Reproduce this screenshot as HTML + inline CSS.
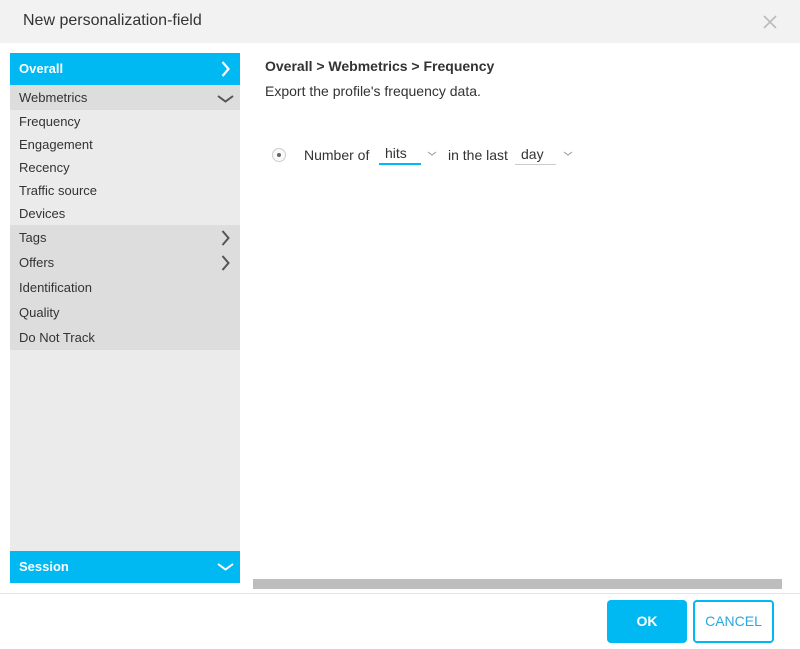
<!DOCTYPE html>
<html><head><style>
*{margin:0;padding:0;box-sizing:border-box}
body{width:800px;height:649px;background:#fff;font-family:"Liberation Sans",sans-serif;position:relative;overflow:hidden;color:#333}
.a{position:absolute}
.hdr{left:0;top:0;width:800px;height:43px;background:#f2f2f2}
.side{left:10px;top:53px;width:230px;height:530px;background:#ebebeb}
.row{position:absolute;left:0;width:230px;font-size:13px;padding-left:9px;color:#333}
.chev{position:absolute;right:10px}
</style></head><body>
<div class="a hdr"></div>
<div class="a" style="left:23px;top:12px;font-size:16px;color:#333">New personalization-field</div>
<svg class="a" style="left:763px;top:15px" width="14" height="14"><path d="M1 1l12 12M13 1L1 13" stroke="#bbb" stroke-width="1.6"/></svg>
<div class="a side">
 <div class="row" style="top:0;height:32px;background:#00b9f2;color:#fff;line-height:32px;font-weight:bold">Overall<svg class="chev" style="top:8px" width="9" height="16"><path d="M1.5 1l6 7-6 7" stroke="#fff" stroke-width="2.2" fill="none"/></svg></div>
 <div class="row" style="top:32px;height:25px;background:#ddd;line-height:25px">Webmetrics<svg class="chev" style="top:10px;right:6px" width="17" height="8"><path d="M1 1l7.5 5.5 7.5-5.5" stroke="#555" stroke-width="2" fill="none"/></svg></div>
 <div class="row" style="top:57px;line-height:23px">Frequency</div>
 <div class="row" style="top:80px;line-height:23px">Engagement</div>
 <div class="row" style="top:103px;line-height:23px">Recency</div>
 <div class="row" style="top:126px;line-height:23px">Traffic source</div>
 <div class="row" style="top:149px;line-height:23px">Devices</div>
 <div class="row" style="top:172px;height:125px;background:#ddd"></div>
 <div class="row" style="top:172px;line-height:25px">Tags<svg class="chev" style="top:5px" width="9" height="16"><path d="M1.5 1l6 7-6 7" stroke="#555" stroke-width="2" fill="none"/></svg></div>
 <div class="row" style="top:197px;line-height:25px">Offers<svg class="chev" style="top:5px" width="9" height="16"><path d="M1.5 1l6 7-6 7" stroke="#555" stroke-width="2" fill="none"/></svg></div>
 <div class="row" style="top:222px;line-height:25px">Identification</div>
 <div class="row" style="top:247px;line-height:25px">Quality</div>
 <div class="row" style="top:272px;line-height:25px">Do Not Track</div>
 <div class="row" style="top:498px;height:32px;background:#00b9f2;color:#fff;line-height:32px;font-weight:bold">Session<svg class="chev" style="top:12px;right:6px" width="17" height="8"><path d="M1 1l7.5 5.5 7.5-5.5" stroke="#fff" stroke-width="2" fill="none"/></svg></div>
</div>
<div class="a" style="left:265px;top:58px;font-size:14px;font-weight:bold;color:#333">Overall &gt; Webmetrics &gt; Frequency</div>
<div class="a" style="left:265px;top:83px;font-size:14px;color:#333">Export the profile's frequency data.</div>
<div class="a" style="left:272px;top:148px;width:14px;height:14px;border:1px solid #ccc;border-radius:50%;background:#fafafa"></div>
<div class="a" style="left:277px;top:153px;width:4px;height:4px;background:#666;border-radius:50%"></div>
<div class="a" style="left:304px;top:147px;font-size:14px">Number of</div>
<div class="a" style="left:379px;top:145px;width:42px;height:20px;border-bottom:2px solid #00b9f2;font-size:14px;padding-left:6px">hits</div>
<svg class="a" style="left:427px;top:151px" width="10" height="6"><path d="M1 1l4 3 4-3" stroke="#999" fill="none"/></svg>
<div class="a" style="left:448px;top:147px;font-size:14px">in the last</div>
<div class="a" style="left:515px;top:146px;width:41px;height:19px;border-bottom:1px solid #ccc;font-size:14px;padding-left:6px">day</div>
<svg class="a" style="left:563px;top:151px" width="10" height="6"><path d="M1 1l4 3 4-3" stroke="#999" fill="none"/></svg>
<div class="a" style="left:253px;top:579px;width:529px;height:10px;background:#bdbdbd"></div>
<div class="a" style="left:0;top:593px;width:800px;height:1px;background:#e6e6e6"></div>
<div class="a" style="left:607px;top:600px;width:80px;height:43px;background:#00b9f2;border-radius:4px;color:#fff;font-weight:bold;font-size:14px;text-align:center;line-height:43px">OK</div>
<div class="a" style="left:693px;top:600px;width:81px;height:43px;border:2px solid #00b9f2;border-radius:4px;color:#29a8e0;font-size:14px;text-align:center;line-height:39px">CANCEL</div>
</body></html>
